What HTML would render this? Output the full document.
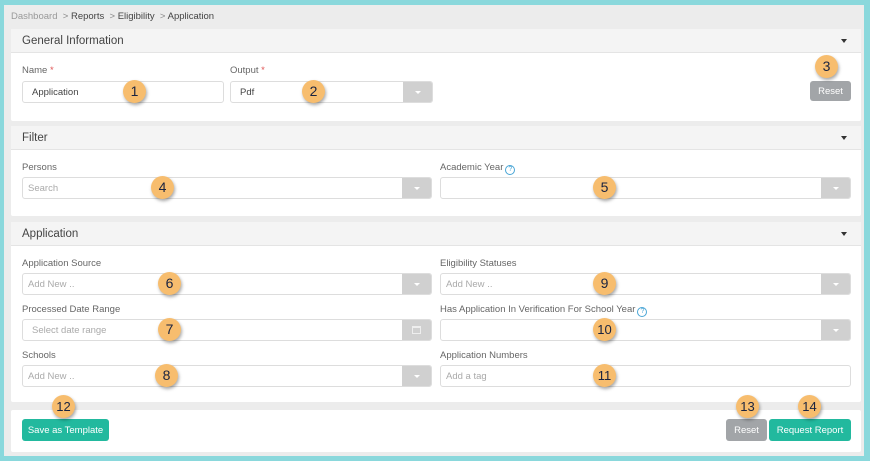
<!DOCTYPE html>
<html><head><meta charset="utf-8"><style>
*{box-sizing:border-box;margin:0;padding:0}
body{width:870px;height:461px;background:#8ad8dc;font-family:"Liberation Sans",sans-serif;position:relative;overflow:hidden}
.frame{position:absolute;left:4px;top:5px;width:860px;height:451px;background:#ececec}
.a{position:absolute}
.panel{position:absolute;left:11px;width:850px;background:#fff;border-radius:2px}
.hdr{position:absolute;left:0;right:0;top:0;height:24px;background:#f4f4f4;border-bottom:1px solid #e4e4e4;font-size:11.5px;color:#444;padding:6px 0 0 11px}
.hdr .car{position:absolute;right:14px;top:10px;width:0;height:0;border-left:3.5px solid transparent;border-right:3.5px solid transparent;border-top:4px solid #333}
.lbl{position:absolute;font-size:9.5px;color:#666}
.req{color:#e05555}
.inp{position:absolute;height:22px;border:1px solid #ddd;border-radius:3px;background:#fff;font-size:9.5px;color:#444;padding:5px 0 0 9px}
.ph{color:#aaa;padding-left:5px}
.dd{position:absolute;right:0;top:0;width:29px;height:20px;background:#d0d0d0;border-radius:0 2px 2px 0}
.dd.arr:after{content:"";position:absolute;left:12px;top:9px;border-left:3px solid transparent;border-right:3px solid transparent;border-top:3px solid #fff}
.cal{position:absolute;left:10px;top:6px;width:9px;height:8px;border:1px solid #eee;border-top-width:2px}
.badge{position:absolute;width:23px;height:23px;border-radius:50%;background:#f7bd6e;box-shadow:1px 2px 3px rgba(0,0,0,.35);font-size:14px;color:#1a2340;text-align:center;line-height:23px}
.btn{position:absolute;height:22px;border-radius:3px;color:#fff;font-size:9.5px;display:flex;align-items:center;justify-content:center}
.help{display:inline-flex;align-items:center;justify-content:center;width:10px;height:10px;border:1px solid #4aa6d6;border-radius:50%;color:#4aa6d6;font-size:7px;vertical-align:-1px;margin-left:2px}
</style></head><body>
<div class="frame"></div>
<div class="a" style="left:11px;top:11px;font-size:9.5px;color:#999">Dashboard <span style="color:#888">&nbsp;&gt;</span> <span style="color:#444">Reports</span> <span style="color:#888">&nbsp;&gt;</span> <span style="color:#444">Eligibility</span> <span style="color:#888">&nbsp;&gt;</span> <span style="color:#444">Application</span></div>

<div class="panel" style="top:29px;height:92px">
 <div class="hdr">General Information<div class="car"></div></div>
 <div class="lbl" style="left:11px;top:36px">Name <span class="req">*</span></div>
 <div class="inp" style="left:11px;top:52px;width:202px">Application</div>
 <div class="lbl" style="left:219px;top:36px">Output <span class="req">*</span></div>
 <div class="inp" style="left:219px;top:52px;width:203px">Pdf<div class="dd arr"></div></div>
 <div class="btn" style="left:799px;top:52px;width:41px;height:20px;background:#a2a5a8">Reset</div>
</div>

<div class="panel" style="top:126px;height:90px">
 <div class="hdr">Filter<div class="car"></div></div>
 <div class="lbl" style="left:11px;top:36px">Persons</div>
 <div class="inp ph" style="left:11px;top:51px;width:410px">Search<div class="dd arr"></div></div>
 <div class="lbl" style="left:429px;top:36px">Academic Year<span class="help">?</span></div>
 <div class="inp" style="left:429px;top:51px;width:411px"><div class="dd arr"></div></div>
</div>

<div class="panel" style="top:222px;height:180px">
 <div class="hdr">Application<div class="car"></div></div>
 <div class="lbl" style="left:11px;top:36px">Application Source</div>
 <div class="inp ph" style="left:11px;top:51px;width:410px">Add New ..<div class="dd arr"></div></div>
 <div class="lbl" style="left:429px;top:36px">Eligibility Statuses</div>
 <div class="inp ph" style="left:429px;top:51px;width:411px">Add New ..<div class="dd arr"></div></div>
 <div class="lbl" style="left:11px;top:82px">Processed Date Range</div>
 <div class="inp ph" style="left:11px;top:97px;width:410px;padding-left:9px">Select date range<div class="dd"><div class="cal"></div></div></div>
 <div class="lbl" style="left:429px;top:82px">Has Application In Verification For School Year<span class="help">?</span></div>
 <div class="inp" style="left:429px;top:97px;width:411px"><div class="dd arr"></div></div>
 <div class="lbl" style="left:11px;top:128px">Schools</div>
 <div class="inp ph" style="left:11px;top:143px;width:410px">Add New ..<div class="dd arr"></div></div>
 <div class="lbl" style="left:429px;top:128px">Application Numbers</div>
 <div class="inp ph" style="left:429px;top:143px;width:411px">Add a tag</div>
</div>

<div class="panel" style="top:410px;height:42px">
 <div class="btn" style="left:11px;top:9px;width:87px;background:#22b99e">Save as Template</div>
 <div class="btn" style="left:715px;top:9px;width:41px;background:#a2a5a8">Reset</div>
 <div class="btn" style="left:758px;top:9px;width:82px;background:#22b99e">Request Report</div>
</div>

<div class="badge" style="left:123px;top:80px">1</div>
<div class="badge" style="left:302px;top:80px">2</div>
<div class="badge" style="left:815px;top:55px">3</div>
<div class="badge" style="left:151px;top:176px">4</div>
<div class="badge" style="left:593px;top:176px">5</div>
<div class="badge" style="left:158px;top:272px">6</div>
<div class="badge" style="left:158px;top:318px">7</div>
<div class="badge" style="left:155px;top:364px">8</div>
<div class="badge" style="left:593px;top:272px">9</div>
<div class="badge" style="left:593px;top:318px;font-size:13px">10</div>
<div class="badge" style="left:593px;top:364px;font-size:13px">11</div>
<div class="badge" style="left:52px;top:395px;font-size:13px">12</div>
<div class="badge" style="left:736px;top:395px;font-size:13px">13</div>
<div class="badge" style="left:798px;top:395px;font-size:13px">14</div>
</body></html>
